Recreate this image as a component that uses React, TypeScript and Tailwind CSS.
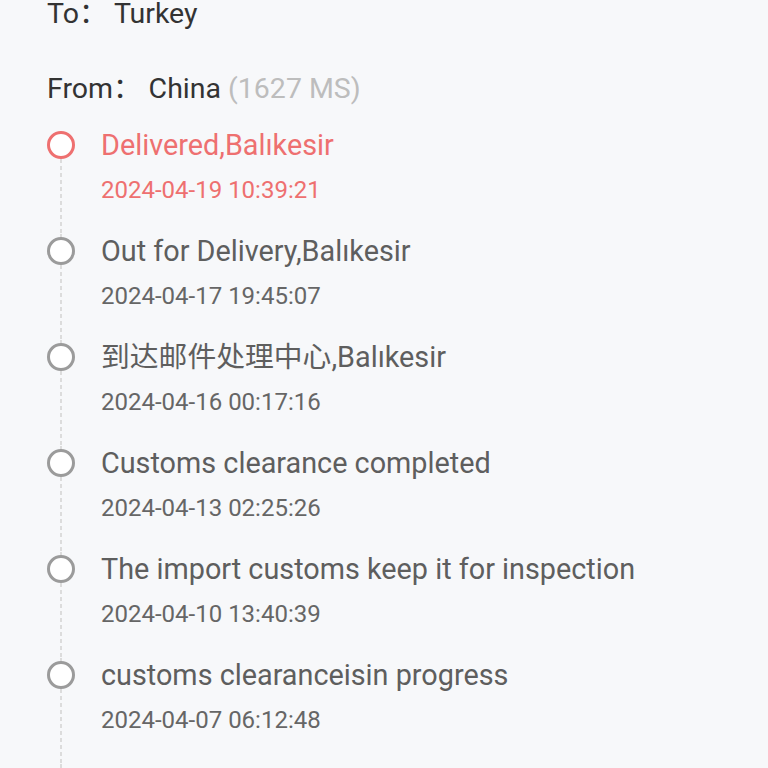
import React from "react";

const items = [
  { title: "Delivered,Balıkesir", date: "2024-04-19 10:39:21", active: true },
  { title: "Out for Delivery,Balıkesir", date: "2024-04-17 19:45:07" },
  { title: "到达邮件处理中心,Balıkesir", date: "2024-04-16 00:17:16" },
  { title: "Customs clearance completed", date: "2024-04-13 02:25:26" },
  { title: "The import customs keep it for inspection", date: "2024-04-10 13:40:39" },
  { title: "customs clearanceisin progress", date: "2024-04-07 06:12:48" },
];

const dash =
  "w-[2px] bg-[repeating-linear-gradient(to_bottom,#dcdcdc_0px,#dcdcdc_4px,transparent_4px,transparent_7px)]";

export default function App() {
  return (
    <div
      className="w-[768px] h-[768px] overflow-hidden bg-[#f7f8fa] pl-[47px]"
      style={{ fontFamily: 'Roboto, "Noto Sans CJK SC", sans-serif' }}
    >
      <div className="mt-[-6px] text-[28.5px] leading-[40px] text-[#333333]">To： Turkey</div>
      <div className="mt-[35px] text-[28.5px] leading-[40px] text-[#333333]">
        From： China <span className="text-[#bdbdbd]">(1627 MS)</span>
      </div>
      <div className="mt-[19px] flex flex-col">
        {items.map((it, i) => (
          <div key={i} className="flex gap-[26px]">
            <div className="flex w-[28px] flex-col items-center">
              <div className={`h-[3px] ${i === 0 ? "w-[2px]" : dash}`} />
              <div
                className={`h-[28px] w-[28px] shrink-0 rounded-full border-[3px] bg-white ${
                  it.active ? "border-[#ee7070]" : "border-[#9b9b9b]"
                }`}
              />
              <div className={`flex-1 ${dash}`} />
            </div>
            <div className="flex flex-col pb-[29px]">
              <div
                className={`text-[28.8px] leading-[34px] whitespace-nowrap ${
                  it.active ? "text-[#ee7070]" : "text-[#5e5e5e]"
                }`}
              >
                {it.title}
              </div>
              <div
                className={`mt-[13px] text-[24px] leading-[30px] ${
                  it.active ? "text-[#ee7070]" : "text-[#666666]"
                }`}
              >
                {it.date}
              </div>
            </div>
          </div>
        ))}
        <div className="flex">
          <div className="flex w-[28px] flex-col items-center">
            <div className={`h-[60px] ${dash}`} />
          </div>
        </div>
      </div>
    </div>
  );
}
